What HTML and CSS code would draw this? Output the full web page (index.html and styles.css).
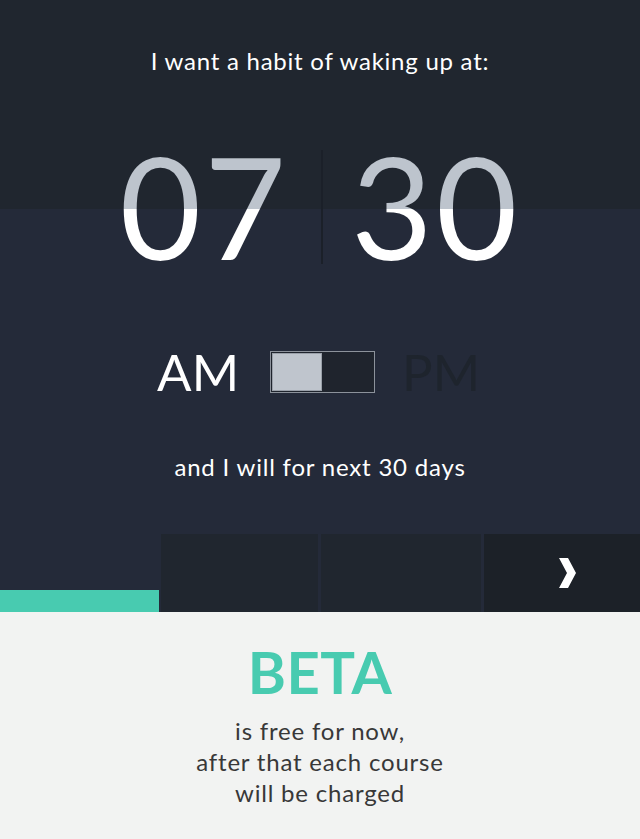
FILE: index.html
```html
<!DOCTYPE html>
<html lang="en">
<head>
<meta charset="utf-8">
<title>Habit</title>
<link rel="stylesheet" href="styles.css">
</head>
<body>
<div class="app">
  <section class="setup">
    <p class="title">I want a habit of waking up at:</p>
    <div class="time">
      <div class="digits digits-left">07</div>
      <div class="divider"></div>
      <div class="digits digits-right">30</div>
    </div>
    <div class="meridiem">
      <span class="am">AM</span>
      <div class="toggle"><div class="knob"></div></div>
      <span class="pm">PM</span>
    </div>
    <p class="days">and I will for next 30 days</p>
    <div class="steps">
      <div class="step step-progress"><div class="progress"></div></div>
      <div class="step step-a"></div>
      <div class="step step-b"></div>
      <div class="step step-next">
        <svg class="chev" width="18" height="30" viewBox="0 0 18 30"><polygon points="1,0 10,0 18,15 10,30 1,30 9,15" fill="#ffffff"/></svg>
      </div>
    </div>
  </section>
  <section class="beta">
    <h2 class="beta-title">BETA</h2>
    <p class="beta-text">is free for now,<br>after that each course<br>will be charged</p>
  </section>
</div>
</body>
</html>
```

FILE: styles.css
```css
html, body {
  margin: 0;
  padding: 0;
}
body {
  font-family: Lato, "Open Sans", sans-serif;
  background: #f2f3f2;
}
.app {
  width: 640px;
  height: 839px;
  display: flex;
  flex-direction: column;
}
.setup {
  height: 612px;
  background: linear-gradient(to bottom, #20262f 0, #20262f 209px, #242a39 209px, #242a39 100%);
  display: flex;
  flex-direction: column;
}
.title {
  margin: 45px 0 0;
  height: 32px;
  line-height: 32px;
  font-size: 24px;
  letter-spacing: 0.75px;
  color: #ffffff;
  text-align: center;
}
.time {
  margin-top: 54px;
  display: grid;
  grid-template-columns: 1fr 2px 1fr;
  align-items: center;
  height: 150px;
}
.digits {
  font-size: 141px;
  line-height: 150px;
  height: 150px;
  background: linear-gradient(to bottom, #bdc4cd 0, #bdc4cd 78px, #ffffff 78px, #ffffff 100%);
  -webkit-background-clip: text;
  background-clip: text;
  color: transparent;
  letter-spacing: 3px;
}
.digits-left {
  text-align: right;
  padding-right: 30px;
}
.digits-right {
  text-align: left;
  padding-left: 30px;
}
.divider {
  width: 2px;
  height: 114px;
  background: #1b2029;
  margin-top: 2px;
  transform: translateX(2px);
}
.meridiem {
  margin-top: 70px;
  display: grid;
  grid-template-columns: 1fr 105px 1fr;
  align-items: center;
  padding-left: 5px;
  height: 42px;
}
.am, .pm {
  font-size: 51px;
  line-height: 42px;
}
.am {
  color: #ffffff;
  text-align: right;
  padding-right: 31px;
}
.pm {
  color: #1e242d;
  text-align: left;
  padding-left: 27px;
}
.toggle {
  width: 105px;
  height: 42px;
  box-sizing: border-box;
  border: 1px solid #8c929b;
  background: #1f242d;
  padding: 1px;
}
.knob {
  width: 50px;
  height: 38px;
  box-sizing: border-box;
  background: #bfc5cd;
  border: 1px solid #9aa0a9;
}
.days {
  margin: 58px 0 0;
  height: 32px;
  line-height: 32px;
  font-size: 24px;
  letter-spacing: 0.8px;
  color: #ffffff;
  text-align: center;
}
.steps {
  margin-top: auto;
  height: 78px;
  display: flex;
}
.step {
  height: 78px;
}
.step-progress {
  width: 161px;
  display: flex;
  align-items: flex-end;
}
.progress {
  width: 159px;
  height: 22px;
  background: #48cbb0;
}
.step-a {
  width: 157px;
  background: #20262f;
}
.step-b {
  width: 160px;
  margin-left: 3px;
  background: #20262f;
}
.step-next {
  width: 156px;
  margin-left: 3px;
  background: #1c2128;
  display: flex;
  align-items: center;
  justify-content: center;
  padding-left: 10px;
  box-sizing: border-box;
}
.beta {
  flex: 1;
  background: #f2f3f2;
  text-align: center;
}
.beta-title {
  margin: 25px 0 0;
  font-size: 58px;
  line-height: 70px;
  font-weight: 700;
  color: #48cbb0;
  letter-spacing: 0.5px;
}
.beta-text {
  margin: 8px 0 0;
  font-size: 24px;
  line-height: 31px;
  letter-spacing: 0.8px;
  color: #383838;
}
```
